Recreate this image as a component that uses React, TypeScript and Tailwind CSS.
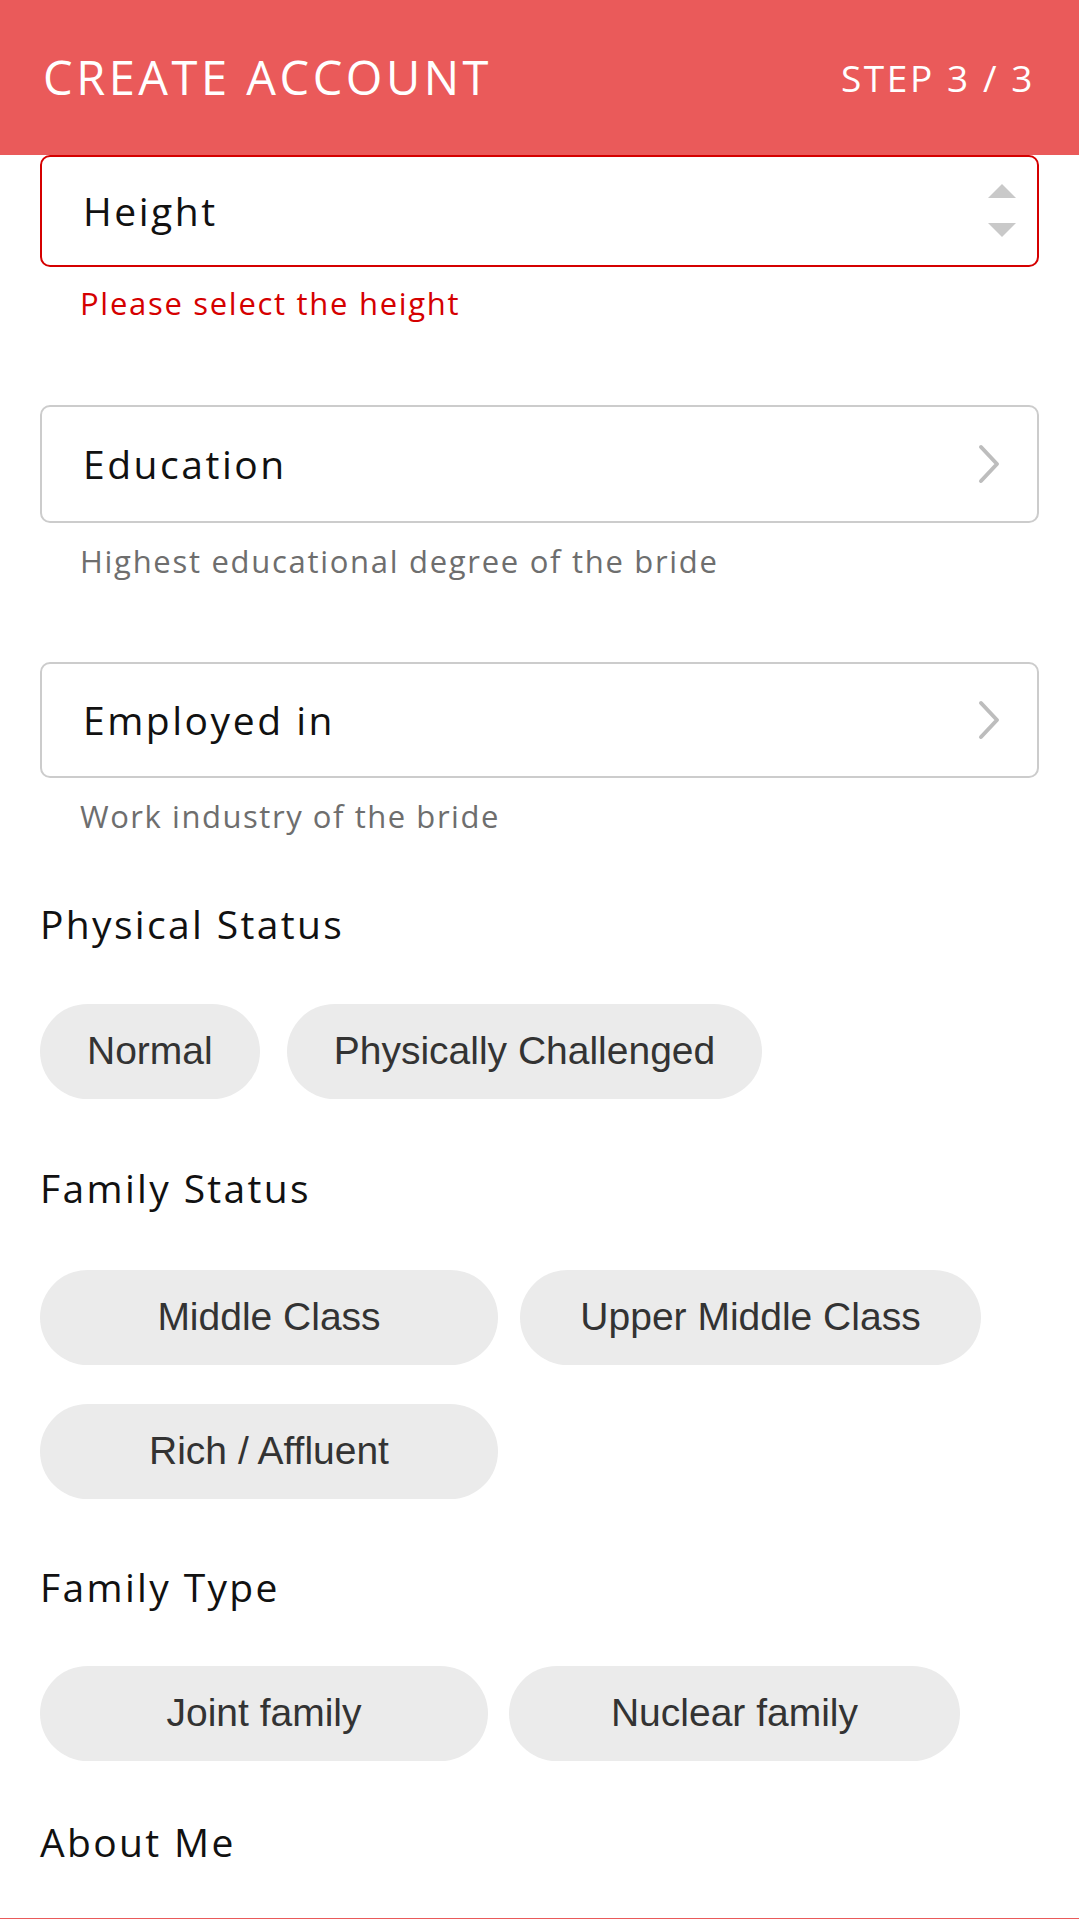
import React, { useState } from 'react';

const sans = { fontFamily: '"Open Sans", "Noto Sans", sans-serif' };

function Chevron() {
    return (
        <svg width="28" height="42" viewBox="0 0 28 42" fill="none">
            <path d="M6 4 L22 21 L6 38" stroke="#bdbdbd" strokeWidth="4" strokeLinecap="round" strokeLinejoin="round" />
        </svg>
    );
}

function Spinner() {
    return (
        <svg width="30" height="54" viewBox="0 0 30 54">
            <polygon points="15,0 29,14 1,14" fill="#c9c9c9" />
            <polygon points="1,39 29,39 15,53" fill="#c9c9c9" />
        </svg>
    );
}

function Pill({ label, active, onClick, className }: any) {
    return (
        <button
            onClick={onClick}
            className={`h-[95px] rounded-full flex items-center justify-center font-['Liberation_Sans',Arial,sans-serif] text-[39px] text-[#333333] ${active ? 'bg-[#e0e0e0]' : 'bg-[#ebebeb]'} ${className}`}
        >
            {label}
        </button>
    );
}

export default function App() {
    const [physical, setPhysical] = useState('');
    const [family, setFamily] = useState('');
    const [type, setType] = useState('');

    return (
        <div className="w-[1079px] h-[1919px] overflow-hidden bg-white flex flex-col" style={sans}>
            <div className="h-[155px] shrink-0 bg-[#ea5a5a] flex items-center justify-between pl-[43px] pr-[44px]">
                <div className="text-white text-[47px] tracking-[0.075em] leading-none">CREATE ACCOUNT</div>
                <div className="text-white text-[37px] tracking-[0.07em] leading-none">STEP 3 / 3</div>
            </div>

            <div className="px-[40px] flex flex-col">
                <div className="h-[112px] border-2 border-[#d50000] rounded-[10px] flex items-center justify-between pl-[41px] pr-[20px]">
                    <span className="text-[39px] text-[#111] tracking-[0.065em]">Height</span>
                    <Spinner />
                </div>
                <div className="mt-[16px] pl-[40px] text-[31px] leading-[40px] text-[#d50000] tracking-[0.055em]">Please select the height</div>

                <div className="mt-[82px] h-[118px] border-2 border-[#cccccc] rounded-[10px] flex items-center justify-between pl-[41px] pr-[34px]">
                    <span className="text-[39px] text-[#111] tracking-[0.065em]">Education</span>
                    <Chevron />
                </div>
                <div className="mt-[18px] pl-[40px] text-[31px] leading-[40px] text-[#6e6e6e] tracking-[0.055em]">Highest educational degree of the bride</div>

                <div className="mt-[81px] h-[116px] border-2 border-[#cccccc] rounded-[10px] flex items-center justify-between pl-[41px] pr-[34px]">
                    <span className="text-[39px] text-[#111] tracking-[0.065em]">Employed in</span>
                    <Chevron />
                </div>
                <div className="mt-[18px] pl-[40px] text-[31px] leading-[40px] text-[#6e6e6e] tracking-[0.05em]">Work industry of the bride</div>

                <div className="mt-[63px] text-[39px] leading-[50px] text-[#111] tracking-[0.06em]">Physical Status</div>
                <div className="mt-[55px] flex gap-x-[27px]">
                    {['Normal', 'Physically Challenged'].map((item) => (
                        <Pill key={item} label={item} active={physical === item} onClick={() => setPhysical(item)} className="px-[47px]" />
                    ))}
                </div>

                <div className="mt-[64px] text-[39px] leading-[50px] text-[#111] tracking-[0.06em]">Family Status</div>
                <div className="mt-[57px] flex flex-wrap gap-x-[22px] gap-y-[39px]">
                    <Pill label="Middle Class" active={family === 'Middle Class'} onClick={() => setFamily('Middle Class')} className="w-[458px]" />
                    <Pill label="Upper Middle Class" active={family === 'Upper Middle Class'} onClick={() => setFamily('Upper Middle Class')} className="w-[461px]" />
                    <Pill label="Rich / Affluent" active={family === 'Rich / Affluent'} onClick={() => setFamily('Rich / Affluent')} className="w-[458px]" />
                </div>

                <div className="mt-[63px] text-[39px] leading-[50px] text-[#111] tracking-[0.06em]">Family Type</div>
                <div className="mt-[54px] flex gap-x-[21px]">
                    <Pill label="Joint family" active={type === 'Joint family'} onClick={() => setType('Joint family')} className="w-[448px]" />
                    <Pill label="Nuclear family" active={type === 'Nuclear family'} onClick={() => setType('Nuclear family')} className="w-[451px]" />
                </div>

                <div className="mt-[56px] text-[39px] leading-[50px] text-[#111] tracking-[0.06em]">About Me</div>
            </div>

            <div className="mt-[51px] h-[60px] shrink-0 bg-[#ea5a5a]" />
        </div>
    );
}
